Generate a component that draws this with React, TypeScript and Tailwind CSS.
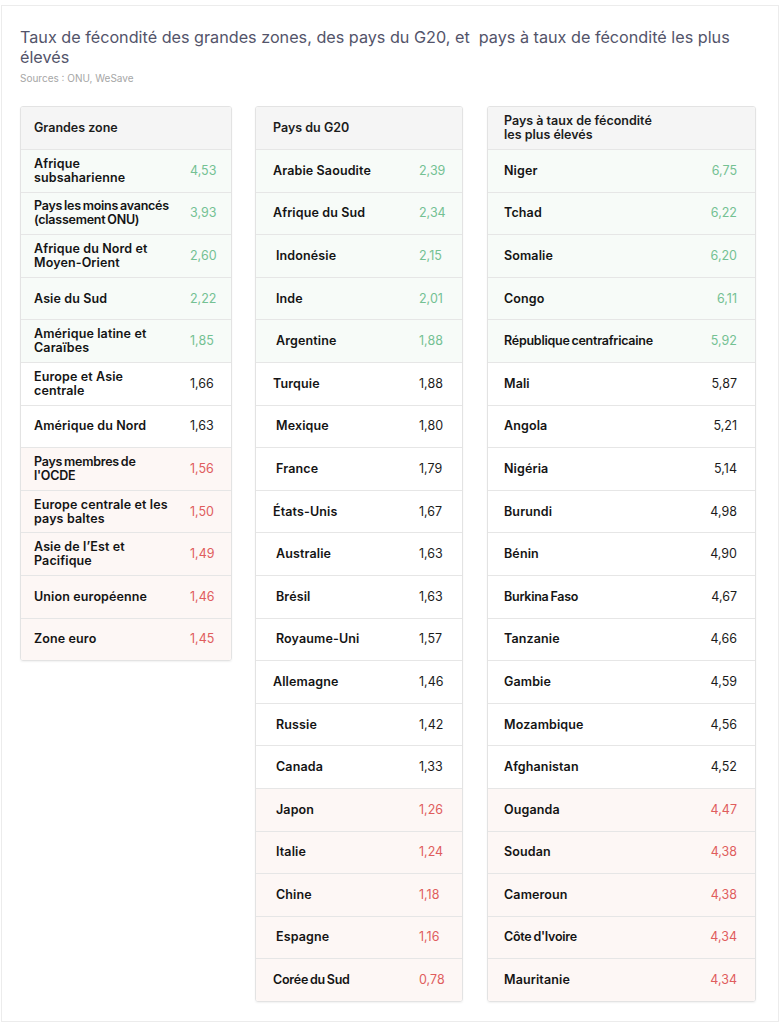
type Tone = "green" | "red" | "plain";
type Row = { label: string; value: string; tone: Tone; indent?: boolean; tight?: boolean };

const zones: Row[] = [
  { label: "Afrique subsaharienne", value: "4,53", tone: "green" },
  { label: "Pays les moins avancés (classement ONU)", value: "3,93", tone: "green", tight: true },
  { label: "Afrique du Nord et Moyen-Orient", value: "2,60", tone: "green" },
  { label: "Asie du Sud", value: "2,22", tone: "green" },
  { label: "Amérique latine et Caraïbes", value: "1,85", tone: "green" },
  { label: "Europe et Asie centrale", value: "1,66", tone: "plain" },
  { label: "Amérique du Nord", value: "1,63", tone: "plain" },
  { label: "Pays membres de l'OCDE", value: "1,56", tone: "red", tight: true },
  { label: "Europe centrale et les pays baltes", value: "1,50", tone: "red" },
  { label: "Asie de l’Est et Pacifique", value: "1,49", tone: "red" },
  { label: "Union européenne", value: "1,46", tone: "red" },
  { label: "Zone euro", value: "1,45", tone: "red" },
];

const g20: Row[] = [
  { label: "Arabie Saoudite", value: "2,39", tone: "green" },
  { label: "Afrique du Sud", value: "2,34", tone: "green" },
  { label: "Indonésie", value: "2,15", tone: "green", indent: true },
  { label: "Inde", value: "2,01", tone: "green", indent: true },
  { label: "Argentine", value: "1,88", tone: "green", indent: true },
  { label: "Turquie", value: "1,88", tone: "plain" },
  { label: "Mexique", value: "1,80", tone: "plain", indent: true },
  { label: "France", value: "1,79", tone: "plain", indent: true },
  { label: "États-Unis", value: "1,67", tone: "plain" },
  { label: "Australie", value: "1,63", tone: "plain", indent: true },
  { label: "Brésil", value: "1,63", tone: "plain", indent: true },
  { label: "Royaume-Uni", value: "1,57", tone: "plain", indent: true },
  { label: "Allemagne", value: "1,46", tone: "plain" },
  { label: "Russie", value: "1,42", tone: "plain", indent: true },
  { label: "Canada", value: "1,33", tone: "plain", indent: true },
  { label: "Japon", value: "1,26", tone: "red", indent: true },
  { label: "Italie", value: "1,24", tone: "red", indent: true },
  { label: "Chine", value: "1,18", tone: "red", indent: true },
  { label: "Espagne", value: "1,16", tone: "red", indent: true },
  { label: "Corée du Sud", value: "0,78", tone: "red", tight: true },
];

const highest: Row[] = [
  { label: "Niger", value: "6,75", tone: "green" },
  { label: "Tchad", value: "6,22", tone: "green" },
  { label: "Somalie", value: "6,20", tone: "green" },
  { label: "Congo", value: "6,11", tone: "green" },
  { label: "République centrafricaine", value: "5,92", tone: "green", tight: true },
  { label: "Mali", value: "5,87", tone: "plain" },
  { label: "Angola", value: "5,21", tone: "plain" },
  { label: "Nigéria", value: "5,14", tone: "plain" },
  { label: "Burundi", value: "4,98", tone: "plain" },
  { label: "Bénin", value: "4,90", tone: "plain" },
  { label: "Burkina Faso", value: "4,67", tone: "plain", tight: true },
  { label: "Tanzanie", value: "4,66", tone: "plain" },
  { label: "Gambie", value: "4,59", tone: "plain" },
  { label: "Mozambique", value: "4,56", tone: "plain" },
  { label: "Afghanistan", value: "4,52", tone: "plain" },
  { label: "Ouganda", value: "4,47", tone: "red" },
  { label: "Soudan", value: "4,38", tone: "red" },
  { label: "Cameroun", value: "4,38", tone: "red" },
  { label: "Côte d'Ivoire", value: "4,34", tone: "red", tight: true },
  { label: "Mauritanie", value: "4,34", tone: "red" },
];

const rowBg: Record<Tone, string> = {
  green: "bg-[#f7fbf8]",
  red: "bg-[#fdf7f5]",
  plain: "bg-white",
};

const valueColor: Record<Tone, string> = {
  green: "text-[#74c193]",
  red: "text-[#e05d5d]",
  plain: "text-[#1c1c1c]",
};

interface TableProps {
  title: string;
  rows: Row[];
  width: string;
  padLeft: string;
  labelWidth: string;
  valueCell: string;
  titleWidth?: string;
}

const FertilityTable = ({ title, rows, width, padLeft, labelWidth, valueCell, titleWidth }: TableProps) => {
  return (
    <div className={`${width} self-start overflow-hidden rounded-[3px] border border-[#e3e3e3] shadow-[0_1px_2px_rgba(0,0,0,0.06)]`}>
      <div className={`flex h-[42px] items-center bg-[#f5f5f5] ${padLeft}`}>
        <div className={`${titleWidth ?? ""} text-[12.5px] font-semibold leading-[14px] text-[#1c1c1c]`}>{title}</div>
      </div>
      {rows.map((row) => (
        <div
          key={row.label}
          className={`flex h-[42.6px] items-center border-t border-[#e6e6e6] ${rowBg[row.tone]} ${padLeft}`}
        >
          <div
            className={`${labelWidth} ${row.indent ? "pl-[3px]" : ""} ${
              row.tight ? "tracking-[-0.02em] [word-spacing:-1px]" : "tracking-[0.01em]"
            } text-[12.5px] font-semibold leading-[14px] text-[#141414]`}
          >
            {row.label}
          </div>
          <div className={`${valueCell} text-[12.5px] leading-[14px] ${valueColor[row.tone]}`}>{row.value}</div>
        </div>
      ))}
    </div>
  );
};

export default function App() {
  return (
    <div className="min-h-screen bg-white pt-[5px] pl-[1px] pr-[2px] pb-[2px] font-['Inter',sans-serif]">
      <div className="min-h-[1017px] border border-[#ececec] bg-white pl-[18px] pt-[21px]">
        <h1 className="max-w-[730px] text-[16.2px] font-normal leading-[20px] text-[#53546a]">
          Taux de fécondité des grandes zones, des pays du G20, et&nbsp; pays à taux de fécondité les plus élevés
        </h1>
        <p className="mt-[5px] text-[10px] leading-[13px] text-[#a6a6a6]">Sources : ONU, WeSave</p>

        <div className="mt-[21px] flex items-start">
          <FertilityTable
            title="Grandes zone"
            rows={zones}
            width="w-[212px]"
            padLeft="pl-[13px]"
            labelWidth="w-[138px] shrink-0"
            valueCell="ml-auto w-[41px]"
          />
          <div className="w-[23px] shrink-0" />
          <FertilityTable
            title="Pays du G20"
            rows={g20}
            width="w-[208px]"
            padLeft="pl-[17px]"
            labelWidth="w-[140px] shrink-0"
            valueCell="ml-auto w-[43px]"
          />
          <div className="w-[24px] shrink-0" />
          <FertilityTable
            title="Pays à taux de fécondité les plus élevés"
            rows={highest}
            width="w-[269px]"
            padLeft="pl-[16px]"
            labelWidth="w-[190px] shrink-0"
            valueCell="ml-auto pr-[18px] text-right"
            titleWidth="max-w-[156px]"
          />
        </div>
      </div>
    </div>
  );
}
